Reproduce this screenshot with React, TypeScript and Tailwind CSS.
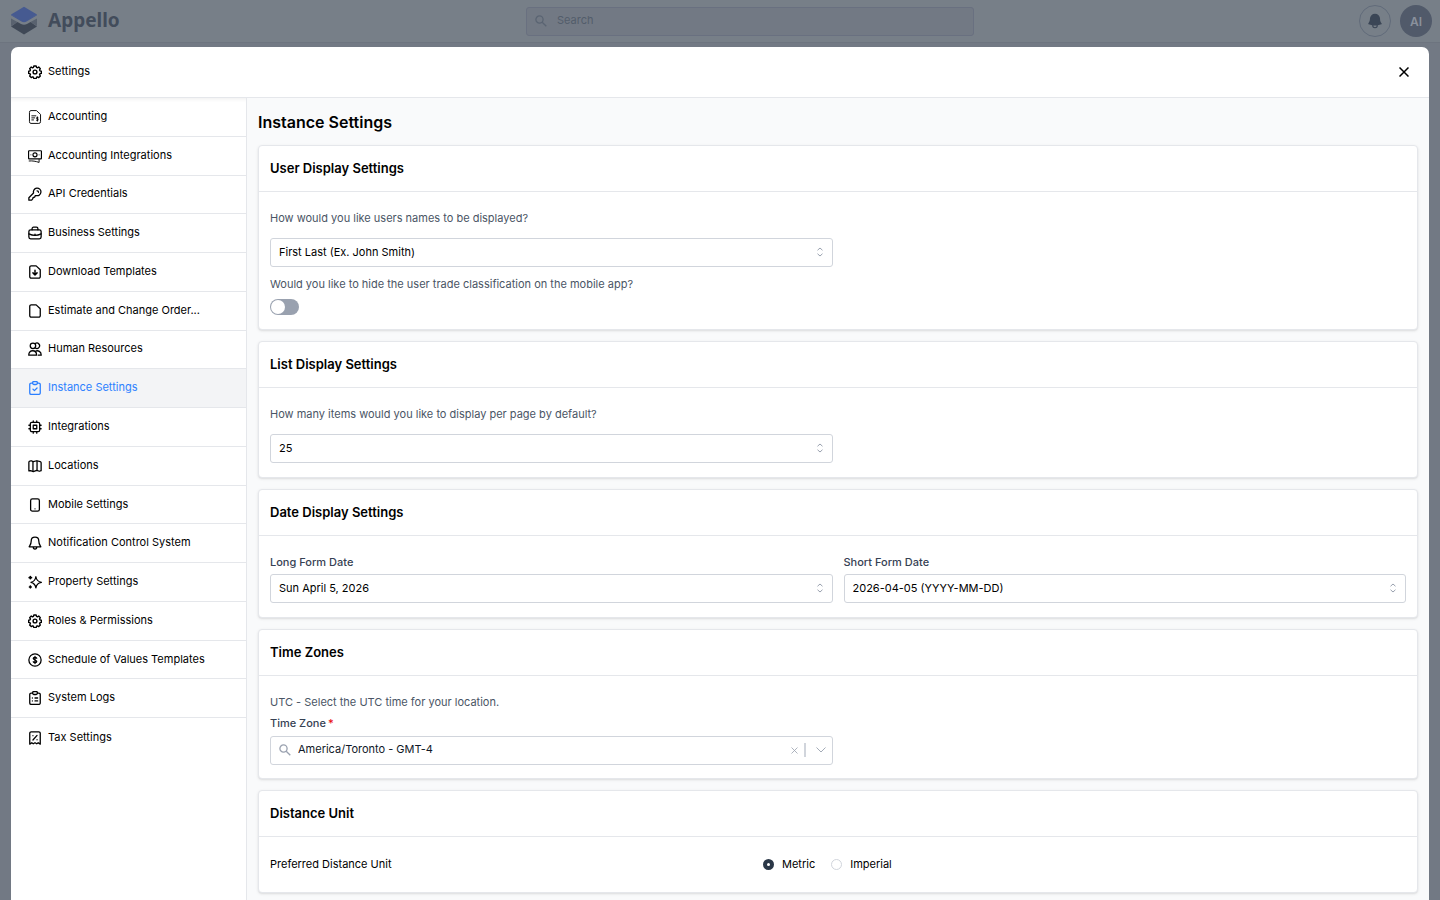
import React from "react";
import { HiBell } from "react-icons/hi2";
import clsx from "clsx";

const GEAR =
  "M10.2 2.500h3.600l.6 2.300 1.500.6 2-1.200 2.500 2.500-1.200 2 .6 1.500 2.200.6v3.400l-2.200.6-.6 1.500 1.200 2-2.500 2.500-2-1.200-1.500.6-.6 2.300h-3.600l-.6-2.300-1.500-.6-2 1.200-2.500-2.500 1.200-2-.6-1.500-2.200-.6v-3.400l2.200-.6.6-1.500-1.200-2 2.500-2.500 2 1.200 1.500-.6z";

function Icon({ children, thin, viewBox = "0 0 24 24" }: { children: React.ReactNode; thin?: boolean; viewBox?: string }) {
  return (
    <svg
      viewBox={viewBox}
      className="size-[14px] shrink-0"
      fill="none"
      stroke="currentColor"
      strokeWidth={thin ? 1.6 : 2.2}
      strokeLinecap="round"
      strokeLinejoin="round"
      aria-hidden="true"
    >
      {children}
    </svg>
  );
}

const SettingsIcon = () => (
  <Icon viewBox="1 1 22 22">
    <path d={GEAR} />
    <circle cx="12" cy="12" r="3" />
  </Icon>
);

const items: { label: string; icon: React.ReactNode }[] = [
  {
    label: "Accounting",
    icon: (
      <Icon thin>
        <path d="M2.500 3.500a2.500 2.500 0 0 1 2.500-2.500h9.500l7 6.500v12.500a3 3 0 0 1-3 3H5a2.500 2.500 0 0 1-2.500-2.500z" />
        <path d="M6.500 10h7M6.500 13.500h5M6.500 17h3" />
        <path d="M17.500 13.200c-1-1-3-.8-3 .7 0 2 3.200 1.200 3.200 2.900 0 1.600-2.500 1.700-3.500.6M16.200 12v7" />
      </Icon>
    ),
  },
  {
    label: "Accounting Integrations",
    icon: (
      <Icon thin>
        <rect x="1" y="3" width="22" height="14" rx="1" strokeWidth="2" />
        <circle cx="12" cy="10" r="3.500" strokeWidth="2" />
        <path d="M5 10h.01M19 10h.01M2 20.500c6-.5 11 .5 17 2.500v-5" />
      </Icon>
    ),
  },
  {
    label: "API Credentials",
    icon: (
      <Icon>
        <path d="M9.500 10.200a6.500 6.500 0 1 1 4.800 4.500l-2 .3-1 2.500-2.500.5-.8 2.500-1.700 2H1.500v-4z" />
        <path d="M15.500 6.500a2.500 2.500 0 0 1 2.500 2.500" />
      </Icon>
    ),
  },
  {
    label: "Business Settings",
    icon: (
      <Icon>
        <rect x="1.500" y="6.500" width="21" height="15.500" rx="3" />
        <path d="M7 6.500V4.500a2.500 2.500 0 0 1 2.500-2.500h5A2.500 2.500 0 0 1 17 4.500v2M1.500 13.500c6 3 15 3 21 0M12 14v1.500" />
      </Icon>
    ),
  },
  {
    label: "Download Templates",
    icon: (
      <Icon>
        <path d="M3 4A2.500 2.500 0 0 1 5.500 1.500H14l7 6.500v12A2.500 2.500 0 0 1 18.500 22.500h-13A2.500 2.500 0 0 1 3 20z" />
        <path d="M12 9v7.500M8.500 13.500l3.500 3.500 3.500-3.500" strokeWidth="2.500" />
      </Icon>
    ),
  },
  {
    label: "Estimate and Change Order...",
    icon: (
      <Icon>
        <path d="M3 4A2.500 2.500 0 0 1 5.500 1.500H14l7 6.500v12A2.500 2.500 0 0 1 18.500 22.500h-13A2.500 2.500 0 0 1 3 20z" />
      </Icon>
    ),
  },
  {
    label: "Human Resources",
    icon: (
      <Icon>
        <circle cx="8.500" cy="6.500" r="4.700" />
        <path d="M12.500 2.600a4.700 4.700 0 1 1 0 7.800" />
        <path d="M1.300 22.500c0-4.500 2.700-7.500 6.700-7.500s6.700 3 6.700 7.500zM12.500 15.800c5-2.300 10.200.7 10.200 6.700h-5" />
      </Icon>
    ),
  },
  {
    label: "Instance Settings",
    icon: (
      <Icon>
        <path d="M8 3.500H5.500A2.500 2.500 0 0 0 3 6v14.500A2.500 2.500 0 0 0 5.500 23h13a2.500 2.500 0 0 0 2.500-2.500V6a2.500 2.500 0 0 0-2.500-2.500H16" />
        <path d="M8 2.500A1.500 1.500 0 0 1 9.500 1h5A1.500 1.500 0 0 1 16 2.500V4a2 2 0 0 1-2 2h-4a2 2 0 0 1-2-2zM8.500 14l2.500 2.500 4.500-4.500" />
      </Icon>
    ),
  },
  {
    label: "Integrations",
    icon: (
      <Icon>
        <rect x="4" y="4" width="16" height="16" rx="2.500" />
        <rect x="9" y="9" width="6" height="6" />
        <path d="M9 1.500V4M15 1.500V4M9 20v2.500M15 20v2.500M1.500 9H4M1.500 15H4M20 9h2.500M20 15h2.500" />
      </Icon>
    ),
  },
  {
    label: "Locations",
    icon: (
      <Icon>
        <path d="M1.500 5.500A2 2 0 0 1 3 3.800L5.500 3l3.500 1.500L15 3l6 1.500a2 2 0 0 1 1.500 2V20l-3 1-4.500-1.500-6 2-4.500-1.500-3 .5z" />
        <path d="M8.500 4.500V21M15.500 3.500V19" />
      </Icon>
    ),
  },
  {
    label: "Mobile Settings",
    icon: (
      <Icon>
        <rect x="4.500" y="1.500" width="15" height="21" rx="3" />
        <path d="M12 18.500h.01" />
      </Icon>
    ),
  },
  {
    label: "Notification Control System",
    icon: (
      <Icon>
        <path d="M12 2c-4 0-6.500 3-6.500 6.500 0 5-1.500 6.500-3.500 10h20c-2-3.500-3.500-5-3.500-10C18.500 5 16 2 12 2zM9 19c0 4.500 6 4.500 6 0" />
      </Icon>
    ),
  },
  {
    label: "Property Settings",
    icon: (
      <Icon>
        <path d="M13.500 3c1 6 3.500 8.500 9.500 9.500-6 1-8.500 3.500-9.500 9.500-1-6-3.500-8.500-8.500-9.500 5-1 7.500-3.500 8.500-9.500z" />
        <path d="M4 2.500v4M2 4.500h4M4 19v3M2.500 20.500h3" strokeWidth="2.800" />
      </Icon>
    ),
  },
  { label: "Roles & Permissions", icon: <SettingsIcon /> },
  {
    label: "Schedule of Values Templates",
    icon: (
      <Icon>
        <circle cx="12" cy="12" r="10.500" />
        <path d="M15 9c-1-2-6-2-6 .5s6 2.500 6 5-5 2.500-6 .500M12 6v12" />
      </Icon>
    ),
  },
  {
    label: "System Logs",
    icon: (
      <Icon>
        <path d="M8 3.500H5.500A2.500 2.500 0 0 0 3 6v14.500A2.500 2.500 0 0 0 5.500 23h13a2.500 2.500 0 0 0 2.500-2.500V6a2.500 2.500 0 0 0-2.500-2.500H16" />
        <path d="M8 2.500A1.500 1.500 0 0 1 9.500 1h5A1.500 1.500 0 0 1 16 2.500V4a2 2 0 0 1-2 2h-4a2 2 0 0 1-2-2zM7.500 12h.01M12 12h4.500M7.500 17h.01M12 17h4.500" />
      </Icon>
    ),
  },
  {
    label: "Tax Settings",
    icon: (
      <Icon>
        <path d="M3 22.500V4a2.500 2.500 0 0 1 2.500-2.500h13A2.500 2.500 0 0 1 21 4v18.500L17.500 20 15 22l-3-2-3 2-2.500-2z" />
        <path d="M15.500 7.500l-7 8M8.500 8h.01M15.500 15h.01" />
      </Icon>
    ),
  },
];

const Search = () => (
  <svg viewBox="0 0 12 12" className="size-[12px] shrink-0" fill="none" stroke="currentColor" strokeWidth="1.300" aria-hidden="true">
    <circle cx="4.500" cy="4.500" r="3.600" />
    <path d="M7.200 7.200 11.300 11.300" />
  </svg>
);

function Select({ id, value }: { id: string; value: string }) {
  return (
    <div className="relative">
      <select
        id={id}
        className="block h-[29px] w-full appearance-none rounded-[3px] border border-gray-300 bg-white pr-8 pb-[1px] pl-2 text-[11px] text-black"
      >
        <option>{value}</option>
      </select>
      <svg
        viewBox="0 0 8 12"
        className="pointer-events-none absolute top-2 right-[9px] h-3 w-2 text-gray-400"
        fill="none"
        stroke="currentColor"
        strokeLinecap="round"
        strokeLinejoin="round"
        aria-hidden="true"
      >
        <path d="M1.800 4 4 2 6.200 4M1.800 8 4 10 6.200 8" />
      </svg>
    </div>
  );
}

function Card({ title, children, className }: { title: string; children: React.ReactNode; className?: string }) {
  return (
    <section className="rounded-[4px] border border-gray-200 bg-white shadow-sm">
      <h2 className="flex h-[46px] items-center border-b border-gray-200 px-[11px] text-[13px] font-semibold text-black">
        {title}
      </h2>
      <div className={clsx("px-[11px]", className ?? "pt-[18px] pb-[14px]")}>{children}</div>
    </section>
  );
}

export default function App() {
  return (
    <div className="flex h-screen flex-col overflow-hidden bg-[#727984] font-['Inter',sans-serif] text-[11px] leading-[17px] text-black">
      <header className="grid h-[43px] shrink-0 grid-cols-[518px_minmax(0,448px)_1fr] items-center border-b border-[#6d747f] bg-[#777f88] px-2">
        <a href="#" className="flex items-center gap-2 text-[#424c5b]">
          <svg viewBox="0 0 32 30" className="h-[30px] w-8" aria-hidden="true">
            <path d="M3 12.500l6.500 3.500L3 20zM29 12.500 22.500 16l6.500 4z" fill="#59626f" />
            <path d="M3 20.500 9.500 16l3.500 2q3 1.500 6 0l3.500-2 6.500 4.500L16 28.500z" fill="#3f4856" />
            <path d="M3 8.500 16 .8l13 7.700-13 7.500z" fill="#465a91" />
            <path d="M3 8.500 16 15l13-6.500v.8l-10.500 6.200q-2.500 1.300-5 0L3 9.300z" fill="#465a91" />
          </svg>
          <span className="pb-[2px] font-['Noto_Sans',sans-serif] text-[19px] leading-6 font-bold">Appello</span>
        </a>
        <label className="flex h-[29px] items-center gap-[10px] rounded-[3px] border border-[#697080] bg-[#727984] px-2 text-[#5a6472]">
          <Search />
          <input aria-label="Search" placeholder="Search" className="min-w-0 grow pb-[2px] outline-none placeholder:text-[#535d6b]" />
        </label>
        <div className="flex items-center justify-end gap-[9px]">
          <button aria-label="Notifications" className="flex size-8 items-center justify-center rounded-full border border-[#616b7a] text-[#3b4656]">
            <HiBell className="size-[18px]" />
          </button>
          <button className="flex size-8 items-center justify-center rounded-full bg-[#515a6a] text-[12px] font-semibold text-[#8a919c]">AI</button>
        </div>
      </header>

      <div role="dialog" aria-label="Settings" className="mx-[11px] mt-1 flex min-h-0 grow flex-col overflow-hidden rounded-t-[7px] bg-white">
        <div className="flex h-[51px] shrink-0 items-center justify-between border-b border-gray-200 pr-[18px] pl-[17px]">
          <div className="flex items-center gap-[6px]">
            <SettingsIcon />
            <h1 className="pb-[1px]">Settings</h1>
          </div>
          <button aria-label="Close" className="flex size-[14px] items-center justify-center">
            <svg viewBox="0 0 10 10" className="size-[10px]" stroke="currentColor" strokeWidth="1.500" aria-hidden="true">
              <path d="M.5.5 9.500 9.500M9.500.5.5 9.500" />
            </svg>
          </button>
        </div>

        <div className="flex min-h-0 grow">
          <nav className="w-[236px] shrink-0 border-r border-gray-200 shadow-[inset_0_5px_4px_-4px_#00000012]">
            <ul className="grid h-[659px] auto-rows-fr">
              {items.map((item, i) => (
                <li key={item.label} className={clsx(i < items.length - 1 && "border-b border-gray-200")}>
                  <a
                    href="#"
                    className={clsx(
                      "flex h-full items-center gap-[6px] pl-[17px]",
                      item.label === "Instance Settings" && "bg-gray-100 text-blue-500"
                    )}
                  >
                    {item.icon}
                    <span className="pb-[1px]">{item.label}</span>
                  </a>
                </li>
              ))}
            </ul>
          </nav>

          <main className="min-w-0 grow overflow-hidden bg-gray-50 px-[11px]">
            <h2 className="pt-3 pb-[11px] text-[16px] leading-6 font-semibold">Instance Settings</h2>
            <div className="flex flex-col gap-[11px]">
              <Card title="User Display Settings">
                <div className="grid grid-cols-2 gap-x-[11px]">
                  <div>
                    <label htmlFor="names" className="mb-[11px] block text-gray-600">
                      How would you like users names to be displayed?
                    </label>
                    <Select id="names" value="First Last (Ex. John Smith)" />
                  </div>
                </div>
                <label htmlFor="trade" className="mt-[9px] mb-[6px] block text-gray-600">
                  Would you like to hide the user trade classification on the mobile app?
                </label>
                <input
                  id="trade"
                  type="checkbox"
                  role="switch"
                  className="flex h-4 w-[29px] appearance-none items-center rounded-full bg-gray-400 px-[1px] before:size-[14px] before:rounded-full before:bg-white before:content-[''] checked:justify-end checked:bg-blue-500"
                />
              </Card>

              <Card title="List Display Settings">
                <div className="grid grid-cols-2 gap-x-[11px]">
                  <div>
                    <label htmlFor="count" className="mb-[11px] block text-gray-600">
                      How many items would you like to display per page by default?
                    </label>
                    <Select id="count" value="25" />
                  </div>
                </div>
              </Card>

              <Card title="Date Display Settings">
                <div className="grid grid-cols-2 gap-x-[11px]">
                  <div>
                    <label htmlFor="long" className="mb-[3px] block font-medium text-gray-700">Long Form Date</label>
                    <Select id="long" value="Sun April 5, 2026" />
                  </div>
                  <div>
                    <label htmlFor="short" className="mb-[3px] block font-medium text-gray-700">Short Form Date</label>
                    <Select id="short" value="2026-04-05 (YYYY-MM-DD)" />
                  </div>
                </div>
              </Card>

              <Card title="Time Zones" className="pt-[18px] pb-[13px]">
                <p className="mb-1 text-gray-600">UTC - Select the UTC time for your location.</p>
                <div className="grid grid-cols-2 gap-x-[11px]">
                  <div>
                    <label htmlFor="zone" className="mb-1 block font-medium text-gray-700">
                      Time Zone<span className="ml-[2px] text-red-600">*</span>
                    </label>
                    <div className="flex h-[29px] items-center rounded-[3px] border border-gray-300 pr-[6px] pb-[1px] pl-2 text-gray-400">
                      <Search />
                      <input
                        id="zone"
                        defaultValue="America/Toronto - GMT-4"
                        className="ml-[7px] min-w-0 grow pb-[1px] text-gray-900 outline-none"
                      />
                      <button aria-label="Clear">
                        <svg viewBox="0 0 7 7" className="size-[7px]" stroke="currentColor" strokeWidth="0.800" aria-hidden="true">
                          <path d="M.5.5 6.500 6.500M6.500.5.5 6.500" />
                        </svg>
                      </button>
                      <span className="mr-[10px] ml-[6px] h-[14px] w-[2px] bg-gray-300" />
                      <button aria-label="Open">
                        <svg viewBox="0 0 10 6" className="h-[6px] w-[10px]" fill="none" stroke="currentColor" strokeWidth="0.900" aria-hidden="true">
                          <path d="M.5.5 5 5 9.500.5" />
                        </svg>
                      </button>
                    </div>
                  </div>
                </div>
              </Card>

              <Card title="Distance Unit" className="py-[19px]">
                <fieldset className="flex">
                  <legend className="float-left w-[493px]">Preferred Distance Unit</legend>
                  <div className="flex gap-4">
                    {["Metric", "Imperial"].map((unit) => (
                      <label key={unit} className="flex items-center gap-2">
                        <input
                          type="radio"
                          name="unit"
                          defaultChecked={unit === "Metric"}
                          className="size-[11px] appearance-none rounded-full border border-gray-300 bg-white checked:border-4 checked:border-[#2a3747]"
                        />
                        {unit}
                      </label>
                    ))}
                  </div>
                </fieldset>
              </Card>
            </div>
          </main>
        </div>
      </div>
    </div>
  );
}
